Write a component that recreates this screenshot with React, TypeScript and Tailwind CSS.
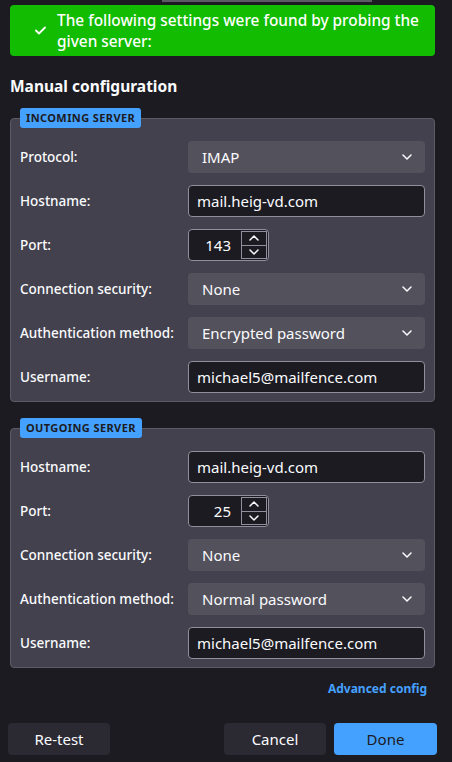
import React from 'react'

const font = { fontFamily: '"Noto Sans", "Open Sans", sans-serif' }

function Chevron({ up = false }: { up?: boolean }) {
  return (
    <svg width="10" height="6" viewBox="0 0 10 6" className={up ? 'rotate-180' : ''}>
      <path d="M1 1l4 4 4-4" fill="none" stroke="#fbfbfe" strokeWidth="1.5" strokeLinecap="round" strokeLinejoin="round" />
    </svg>
  )
}

function SelectBox({ value }: { value: string }) {
  return (
    <div className="flex h-8 items-center justify-between rounded-[4px] bg-[#53525c] pl-[14px] pr-[13px] text-[15px] text-[#fbfbfe]">
      <span>{value}</span>
      <Chevron />
    </div>
  )
}

function TextBox({ value }: { value: string }) {
  return (
    <div className="flex h-8 items-center rounded-[4px] border border-[#8f8f9d] bg-[#1c1b22] px-2 text-[15px] text-[#fbfbfe]">
      {value}
    </div>
  )
}

function PortBox({ value }: { value: string }) {
  return (
    <div className="flex h-8 w-[81px] items-stretch rounded-[4px] border border-[#8f8f9d] bg-[#1c1b22] text-[15px] text-[#fbfbfe]">
      <div className="flex w-[52px] items-center justify-end pr-[10px]">{value}</div>
      <div className="my-[1px] flex w-[26px] flex-col border border-[#8f8f9d]">
        <div className="flex flex-1 items-center justify-center border-b border-[#8f8f9d]">
          <Chevron up />
        </div>
        <div className="flex flex-1 items-center justify-center">
          <Chevron />
        </div>
      </div>
    </div>
  )
}

type Row = { label: string; kind: 'select' | 'text' | 'port'; value: string }

function ServerBox({ title, rows }: { title: string; rows: Row[] }) {
  return (
    <div className="relative rounded-[4px] border border-[#5b5b66] bg-[#42414d] px-[9px] pb-[8px] pt-[22px]">
      <div className="absolute left-[9px] top-[-11px] flex h-5 items-center rounded-[3px] bg-[#45a1ff] px-[6px] text-[11px] font-bold tracking-[0.4px] text-[#1c1b22]">
        {title}
      </div>
      <div className="flex flex-col gap-3">
        {rows.map((r) => (
          <div key={r.label} className="grid grid-cols-[168px_1fr] items-center">
            <span className="text-[13.5px] font-medium text-[#fbfbfe]">{r.label}</span>
            {r.kind === 'select' && <SelectBox value={r.value} />}
            {r.kind === 'text' && <TextBox value={r.value} />}
            {r.kind === 'port' && <PortBox value={r.value} />}
          </div>
        ))}
      </div>
    </div>
  )
}

export default function App() {
  const incoming: Row[] = [
    { label: 'Protocol:', kind: 'select', value: 'IMAP' },
    { label: 'Hostname:', kind: 'text', value: 'mail.heig-vd.com' },
    { label: 'Port:', kind: 'port', value: '143' },
    { label: 'Connection security:', kind: 'select', value: 'None' },
    { label: 'Authentication method:', kind: 'select', value: 'Encrypted password' },
    { label: 'Username:', kind: 'text', value: 'michael5@mailfence.com' },
  ]
  const outgoing: Row[] = [
    { label: 'Hostname:', kind: 'text', value: 'mail.heig-vd.com' },
    { label: 'Port:', kind: 'port', value: '25' },
    { label: 'Connection security:', kind: 'select', value: 'None' },
    { label: 'Authentication method:', kind: 'select', value: 'Normal password' },
    { label: 'Username:', kind: 'text', value: 'michael5@mailfence.com' },
  ]

  return (
    <div className="h-[762px] w-[452px] overflow-hidden bg-[#1c1b22]" style={font}>
      <div className="ml-[162px] h-[2px] w-[210px] bg-[#5b5b66]" />
      <div className="pl-[10px] pr-[17px]">
        <div className="mt-[3px] flex h-[51px] items-center gap-[11px] rounded-[4px] bg-[#12bc00] pl-[25px] pr-3">
          <svg width="11" height="9" viewBox="0 0 11 9" className="shrink-0">
            <path d="M1 4.5l3 3L10 1.5" fill="none" stroke="#fff" strokeWidth="1.8" strokeLinecap="round" strokeLinejoin="round" />
          </svg>
          <p className="text-[15.4px] font-medium leading-[21px] text-white">
            The following settings were found by probing the given server:
          </p>
        </div>

        <h2 className="mt-5 text-[15.5px] font-bold leading-5 text-[#fbfbfe]">Manual configuration</h2>

        <div className="mt-[22px]">
          <ServerBox title="INCOMING SERVER" rows={incoming} />
        </div>
        <div className="mt-[26px]">
          <ServerBox title="OUTGOING SERVER" rows={outgoing} />
        </div>

        <div className="mt-[12px] flex justify-end pr-2">
          <span className="text-[12px] font-bold text-[#45a1ff]">Advanced config</span>
        </div>
      </div>

      <div className="mt-[25px] flex items-center pl-2 pr-[15px] text-[15px]">
        <button className="h-8 w-[102px] rounded-[4px] bg-[#2b2a33] text-[#fbfbfe]">Re-test</button>
        <div className="flex-1" />
        <button className="h-8 w-[102px] rounded-[4px] bg-[#2b2a33] text-[#fbfbfe]">Cancel</button>
        <button className="ml-2 h-8 w-[103px] rounded-[4px] bg-[#45a1ff] text-[#1c1b22]">Done</button>
      </div>
    </div>
  )
}
